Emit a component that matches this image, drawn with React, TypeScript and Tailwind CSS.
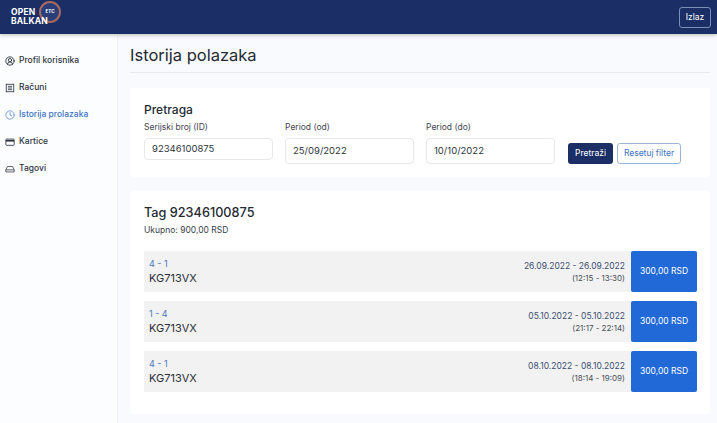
import { CircleUserRound, Clock } from "lucide-react";

const font = { fontFamily: "Inter, 'Liberation Sans', sans-serif" };

const nav = [
  { label: "Profil korisnika", icon: "user" },
  { label: "Računi", icon: "bill" },
  { label: "Istorija prolazaka", icon: "clock", active: true },
  { label: "Kartice", icon: "card" },
  { label: "Tagovi", icon: "tag" },
];

const rows = [
  { route: "4 - 1", date: "26.09.2022 - 26.09.2022", time: "(12:15 - 13:30)" },
  { route: "1 - 4", date: "05.10.2022 - 05.10.2022", time: "(21:17 - 22:14)" },
  { route: "4 - 1", date: "08.10.2022 - 08.10.2022", time: "(18:14 - 19:09)" },
];

function NavIcon({ name }: { name: string }) {
  const cls = "w-[10px] h-[10px] shrink-0";
  if (name === "user") return <CircleUserRound className={cls} strokeWidth={2.2} />;
  if (name === "clock") return <Clock className={cls} strokeWidth={1.6} />;
  if (name === "bill")
    return (
      <svg viewBox="0 0 12 12" className={cls} fill="none" stroke="currentColor" strokeWidth="1">
        <rect x="1.5" y="1.5" width="9" height="9" />
        <path d="M3.5 4h5M3.5 6h5M3.5 8h5" />
      </svg>
    );
  if (name === "card")
    return (
      <svg viewBox="0 0 12 12" className={cls} fill="none" stroke="currentColor" strokeWidth="1">
        <rect x="1" y="2.5" width="10" height="7.5" rx="0.8" />
        <path d="M1 4.5h10" strokeWidth="2" />
      </svg>
    );
  return (
    <svg viewBox="0 0 12 12" className={cls} fill="none" stroke="currentColor" strokeWidth="0.9">
      <path d="M3 3h6l2 4v2.5H1V7l2-4zM1 7h10" />
    </svg>
  );
}

function Field({ label, value, width, height }: { label: string; value: string; width: string; height: string }) {
  return (
    <div className={`${width} flex flex-col`}>
      <div className="text-[8.5px] leading-[12px] text-[#3f4650] h-[14px]">{label}</div>
      <div className={`${height} mt-[3px] bg-white border border-[#e6e8ec] rounded-[4px] pl-[7px] flex items-center text-[9.5px] text-[#2f3640]`}>
        {value}
      </div>
    </div>
  );
}

export default function App() {
  return (
    <div style={font} className="w-[717px] h-[423px] overflow-hidden flex flex-col bg-[#f8fafd]">
      <header className="h-[34px] shrink-0 bg-[#1b2f66] flex items-center justify-between pl-[11px] pr-[6px] shadow-[0_1px_4px_rgba(0,0,0,0.25)] z-10">
        <div className="relative w-[60px] h-[34px] flex items-center">
          <div className="absolute left-[28px] top-[1px] w-[22px] h-[22px] rounded-full border-2 border-[#a8695f] bg-[#2a3f7a] flex items-center justify-center">
            <span className="text-white font-bold text-[4.5px]">ETC</span>
          </div>
          <div className="relative text-white font-bold text-[8.5px] leading-[9.5px] tracking-[0.2px]">
            OPEN<br />BALKAN
          </div>
        </div>
        <button className="w-[32px] h-[21px] rounded-[3px] border border-[#7d8fb8] text-white text-[8.5px] flex items-center justify-center">
          Izlaz
        </button>
      </header>
      <div className="flex flex-1 min-h-0">
        <aside className="w-[118px] shrink-0 bg-[#fbfdff] border-r border-[#eef1f5] pt-[13px] pl-[5px]">
          {nav.map((n) => (
            <div
              key={n.label}
              className={`h-[27px] flex items-center gap-[4px] text-[8.5px] ${n.active ? "text-[#3f74c4]" : "text-[#2e3440]"}`}
            >
              <NavIcon name={n.icon} />
              <span className="font-medium">{n.label}</span>
            </div>
          ))}
        </aside>
        <main className="flex-1 min-w-0 pl-[12px] pr-[7px]">
          <h1 className="text-[16.5px] leading-[22px] mt-[10px] text-[#252a32] font-normal">Istorija polazaka</h1>
          <div className="mt-[6px] border-t border-[#e7eaee]" />
          <section className="mt-[15px] h-[89px] bg-white rounded-[3px] pl-[14px] pt-[14px]">
            <h2 className="text-[12px] leading-[16px] text-[#252a32] font-medium">Pretraga</h2>
            <div className="flex items-start mt-[3px]">
              <Field label="Serijski broj (ID)" value="92346100875" width="w-[129px]" height="h-[22px]" />
              <Field label="Period (od)" value="25/09/2022" width="w-[129px] ml-[12px]" height="h-[26px]" />
              <Field label="Period (do)" value="10/10/2022" width="w-[129px] ml-[12px]" height="h-[26px]" />
              <div className="flex gap-[4px] ml-[13px] mt-[22px]">
                <button className="w-[45px] h-[21px] rounded-[3px] bg-[#1b2f66] text-white text-[8.5px]">Pretraži</button>
                <button className="w-[64px] h-[21px] rounded-[3px] bg-white border border-[#9db6d8] text-[#3f74c4] text-[8.5px]">Resetuj filter</button>
              </div>
            </div>
          </section>
          <section className="mt-[14px] h-[223px] bg-white rounded-[3px] pl-[14px] pr-[13px] pt-[13px]">
            <h2 className="text-[12.7px] leading-[18px] text-[#252a32] font-medium">Tag 92346100875</h2>
            <p className="text-[8.5px] leading-[12px] mt-[2px] text-[#3a4048]">Ukupno: 900,00 RSD</p>
            <div className="mt-[15px] flex flex-col gap-[9px]">
              {rows.map((r) => (
                <div key={r.date} className="h-[41px] bg-[#f2f2f2] flex items-stretch">
                  <div className="flex-1 pl-[5px] pr-[6px] flex justify-between items-center">
                    <div>
                      <div className="text-[9px] leading-[12px] text-[#4a78bd]">{r.route}</div>
                      <div className="text-[11px] leading-[16px] text-[#2c3138]">KG713VX</div>
                    </div>
                    <div className="text-right">
                      <div className="text-[8.5px] leading-[12px] text-[#3c4f72]">{r.date}</div>
                      <div className="text-[8px] leading-[12px] text-[#4a4f58]">{r.time}</div>
                    </div>
                  </div>
                  <div className="w-[66px] bg-[#2169d6] rounded-[2px] flex items-center justify-center text-white text-[8.5px]">
                    300,00 RSD
                  </div>
                </div>
              ))}
            </div>
          </section>
        </main>
      </div>
    </div>
  );
}
